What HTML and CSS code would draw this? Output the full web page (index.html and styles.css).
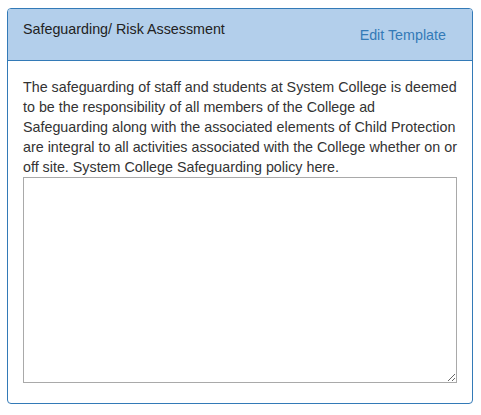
FILE: index.html
```html
<!DOCTYPE html>
<html>
<head>
<meta charset="utf-8">
<link rel="stylesheet" href="styles.css">
</head>
<body>
<div class="panel">
  <div class="panel-heading">
    <span class="title">Safeguarding/ Risk Assessment</span>
    <a class="edit" href="#">Edit Template</a>
  </div>
  <div class="panel-body">
    <p class="desc">The safeguarding of staff and students at System College is deemed to be the responsibility of all members of the College ad Safeguarding along with the associated elements of Child Protection are integral to all activities associated with the College whether on or off site. System College Safeguarding policy here.</p>
    <textarea class="notes"></textarea>
  </div>
</div>
</body>
</html>
```
FILE: styles.css
```css
html, body {
  margin: 0;
  padding: 0;
  background: #fff;
}
body {
  padding: 8px 8px 0 7px;
  font-family: "Liberation Sans", Arial, sans-serif;
  font-size: 14.3px;
  line-height: 20px;
  color: #333;
}
.panel {
  width: 466px;
  box-sizing: border-box;
  border: 1px solid #337ab7;
  border-radius: 4px;
}
.panel-heading {
  display: flex;
  justify-content: space-between;
  align-items: flex-start;
  height: 51px;
  box-sizing: content-box;
  background: #b3cfeb;
  border-bottom: 1px solid #337ab7;
  border-radius: 3px 3px 0 0;
  padding: 0 26px 0 15px;
}
.title {
  margin-top: 10px;
  color: #222;
}
.edit {
  margin-top: 16px;
  color: #337ab7;
  text-decoration: none;
}
.panel-body {
  padding: 16px 15px 20px 15px;
}
.desc {
  margin: 0;
}
.notes {
  display: block;
  width: 434px;
  height: 206px;
  box-sizing: border-box;
  margin: 0;
  border: 1px solid #a9a9a9;
  resize: both;
  font-family: "Liberation Sans", Arial, sans-serif;
}
```
